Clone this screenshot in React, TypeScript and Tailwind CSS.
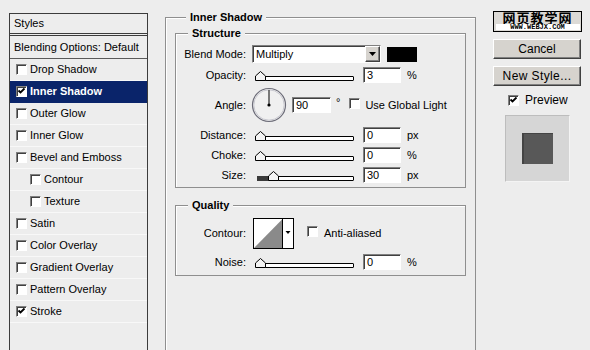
import React from "react";

const sunken =
  "border border-t-[#808080] border-l-[#808080] border-b-white border-r-white shadow-[inset_1px_1px_0_#404040]";
const raised =
  "border border-t-white border-l-white border-b-[#404040] border-r-[#404040] shadow-[inset_-1px_-1px_0_#808080]";

function Check({ checked = false }: { checked?: boolean }) {
  return (
    <span className={`relative inline-block w-[11px] h-[11px] shrink-0 bg-white ${sunken}`}>
      {checked && (
        <svg viewBox="0 0 9 9" className="absolute left-0 top-0 w-[9px] h-[9px]">
          <path d="M1.5 3.5 L3.5 5.5 L7.5 1.5" stroke="black" strokeWidth="1.8" fill="none" />
        </svg>
      )}
    </span>
  );
}

function Field({ v, className = "w-[38px]" }: { v: string; className?: string }) {
  return (
    <div className={`h-[16px] bg-white ${sunken} pl-[3px] text-[11px] leading-[14px] ${className}`}>{v}</div>
  );
}

function Thumb({ className }: { className: string }) {
  return (
    <svg width="11" height="10" viewBox="0 0 11 10" className={`absolute top-[4px] ${className}`}>
      <polygon points="0.5,9.5 0.5,5 5.5,0.5 10.5,5 10.5,9.5" fill="#f4f4f4" stroke="black" strokeWidth="1" />
    </svg>
  );
}

function Slider({ thumb = "left-[3px]", fill = false }: { thumb?: string; fill?: boolean }) {
  return (
    <div className="relative w-[104px] h-[16px] shrink-0">
      <div className="absolute left-[5px] right-[2px] top-[9px] h-[5px] border border-black bg-white rounded-r-[1px]" />
      {fill && <div className="absolute left-[5px] top-[9px] h-[5px] w-[14px] bg-[#3a3a3a]" />}
      <Thumb className={thumb} />
    </div>
  );
}

function Label({ children }: { children: React.ReactNode }) {
  return <div className="w-[70px] shrink-0 text-right">{children}</div>;
}

function Row({
  label,
  className = "mt-[4px] h-[16px]",
  children,
}: {
  label: string;
  className?: string;
  children: React.ReactNode;
}) {
  return (
    <div className={`flex items-center ${className}`}>
      <Label>{label}</Label>
      <div className="ml-[6px] flex items-center">{children}</div>
    </div>
  );
}

function SliderRow({
  label,
  value,
  unit,
  thumb,
  fill,
  className,
}: {
  label: string;
  value: string;
  unit: string;
  thumb?: string;
  fill?: boolean;
  className?: string;
}) {
  return (
    <Row label={label} className={className}>
      <Slider thumb={thumb} fill={fill} />
      <Field v={value} className="ml-[7px] w-[38px]" />
      <span className="ml-[6px]">{unit}</span>
    </Row>
  );
}

const items: { name: string; checked?: boolean; sub?: boolean; selected?: boolean }[] = [
  { name: "Drop Shadow" },
  { name: "Inner Shadow", checked: true, selected: true },
  { name: "Outer Glow" },
  { name: "Inner Glow" },
  { name: "Bevel and Emboss" },
  { name: "Contour", sub: true },
  { name: "Texture", sub: true },
  { name: "Satin" },
  { name: "Color Overlay" },
  { name: "Gradient Overlay" },
  { name: "Pattern Overlay" },
  { name: "Stroke", checked: true },
];

function Button({ children, className = "" }: { children: React.ReactNode; className?: string }) {
  return (
    <div className={`mt-[7px] h-[20px] w-[88px] bg-[#d6d3ce] ${raised} flex items-center justify-center text-[12px] ${className}`}>
      {children}
    </div>
  );
}

export default function App() {
  return (
    <div className="w-[590px] h-[350px] overflow-hidden bg-[#ededed] flex font-['Liberation_Sans',Arial,sans-serif] text-[11px] text-black">
      {/* Styles list */}
      <div className="ml-[9px] mt-[13px] w-[139px] h-[400px] shrink-0 border border-[#3c3c3c] flex flex-col">
        <div className="h-[22px] pl-[4px] flex items-center border-b-[3px] border-double border-[#3c3c3c]">Styles</div>
        <div className="h-[23px] pl-[4px] flex items-center border-b border-[#5a5a5a]">Blending Options: Default</div>
        {items.map((it) => (
          <div
            key={it.name}
            className={`h-[22px] flex items-center border-b ${
              it.selected ? "bg-[#0a246a] text-white font-bold border-[#0a246a]" : "border-[#f8f8f8]"
            } ${it.sub ? "pl-[20px]" : "pl-[6px]"}`}
          >
            <Check checked={it.checked} />
            <span className="ml-[3px]">{it.name}</span>
          </div>
        ))}
      </div>

      {/* Main settings */}
      <fieldset className="ml-[17px] mt-[10px] w-[311px] h-[400px] shrink-0 border border-[#8f8f8f] shadow-[inset_1px_1px_0_#fff] pl-[9px]">
        <legend className="ml-[11px] px-[4px] font-bold leading-[14px] bg-[#ededed]">Inner Shadow</legend>

        <fieldset className="mt-[2px] w-[291px] border border-[#8f8f8f] shadow-[inset_1px_1px_0_#fff] pt-[5px] pb-[4px]">
          <legend className="ml-[12px] px-[4px] font-bold leading-[14px] bg-[#ededed]">Structure</legend>

          <Row label="Blend Mode:" className="h-[18px]">
            <div className={`w-[129px] h-[18px] bg-white ${sunken} flex items-center justify-between`}>
              <span className="pl-[3px] text-[11px]">Multiply</span>
              <div className={`w-[15px] h-[16px] bg-[#d6d3ce] ${raised} flex items-center justify-center`}>
                <svg width="7" height="4" viewBox="0 0 7 4">
                  <polygon points="0,0 7,0 3.5,4" fill="black" />
                </svg>
              </div>
            </div>
            <div className="ml-[6px] w-[30px] h-[15px] bg-black" />
          </Row>

          <SliderRow label="Opacity:" value="3" unit="%" className="mt-[4px] h-[16px]" />

          <Row label="Angle:" className="mt-[5px] h-[34px]">
            <svg width="36" height="36" viewBox="0 0 36 36" className="-ml-[1px]">
              <circle cx="18" cy="18" r="16.5" fill="#f0f0f0" stroke="#6c6c78" strokeWidth="1.2" />
              <circle cx="18" cy="18" r="15.2" fill="none" stroke="#c9c9d0" strokeWidth="1" />
              <line x1="18" y1="18" x2="18" y2="3" stroke="black" strokeWidth="1" />
              <circle cx="18" cy="18" r="1.6" fill="black" />
            </svg>
            <Field v="90" className="ml-[5px] w-[39px]" />
            <span className="ml-[5px] -mt-[6px]">°</span>
            <span className="ml-[9px]">
              <Check />
            </span>
            <span className="ml-[5px]">Use Global Light</span>
          </Row>

          <SliderRow label="Distance:" value="0" unit="px" className="mt-[5px] h-[16px]" />
          <SliderRow label="Choke:" value="0" unit="%" className="mt-[4px] h-[16px]" />
          <SliderRow label="Size:" value="30" unit="px" thumb="left-[16px]" fill className="mt-[4px] h-[16px]" />
        </fieldset>

        <fieldset className="mt-[10px] w-[291px] border border-[#8f8f8f] shadow-[inset_1px_1px_0_#fff] pt-[6px] pb-[5px]">
          <legend className="ml-[12px] px-[4px] font-bold leading-[14px] bg-[#ededed]">Quality</legend>
          <Row label="Contour:" className="h-[30px]">
            <svg width="41" height="31" viewBox="0 0 41 31" className="ml-[1px]">
              <rect x="0.5" y="0.5" width="40" height="30" fill="white" stroke="black" />
              <polygon points="1,30 29.5,1 29.5,30" fill="#8a8a8a" />
              <line x1="29.5" y1="1" x2="29.5" y2="30" stroke="black" />
              <polygon points="32.5,13 37.5,13 35,16" fill="black" />
            </svg>
            <span className="ml-[13px]">
              <Check />
            </span>
            <span className="ml-[6px]">Anti-aliased</span>
          </Row>
          <SliderRow label="Noise:" value="0" unit="%" className="mt-[6px] h-[16px]" />
        </fieldset>
      </fieldset>

      {/* Buttons */}
      <div className="ml-[17px] w-[90px] shrink-0 flex flex-col">
        <div className="mt-[11px] h-[21px] w-[89px] border border-black bg-[#dcdad6] flex flex-col items-center">
          <span className="-mt-[1px] h-[13px] leading-[13px] text-[13px] font-bold font-['Noto_Sans_CJK_SC',sans-serif] tracking-[1px]">
            网页教学网
          </span>
          <span className="w-[84px] bg-white text-center leading-[6px] h-[6px] text-[7px] font-bold font-['Liberation_Mono',monospace]">
            WWW.WEBJX.COM
          </span>
        </div>
        <Button>Cancel</Button>
        <Button className="tracking-[0.4px]">New Style...</Button>
        <div className="mt-[6px] h-[16px] flex items-center pl-[15px]">
          <Check checked />
          <span className="ml-[6px] text-[12px]">Preview</span>
        </div>
        <div className="mt-[7px] ml-[12px] w-[65px] h-[67px] bg-[#d6d6d6] border border-t-[#bdbdbd] border-l-[#bdbdbd] border-b-[#f4f4f4] border-r-[#f4f4f4] flex items-center justify-center">
          <div className="w-[31px] h-[31px] bg-[#585858] border-l-[2px] border-t border-[#444444]" />
        </div>
      </div>
    </div>
  );
}
